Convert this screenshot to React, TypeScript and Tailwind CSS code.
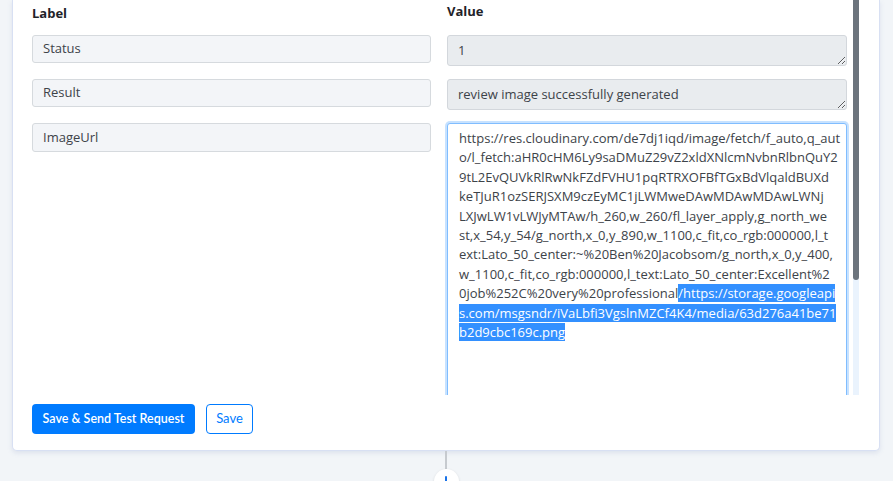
import React from 'react'

const URL_LINES = [
  'https://res.cloudinary.com/de7dj1iqd/image/fetch/f_auto,q_aut',
  'o/l_fetch:aHR0cHM6Ly9saDMuZ29vZ2xldXNlcmNvbnRlbnQuY2',
  '9tL2EvQUVkRlRwNkFZdFVHU1pqRTRXOFBfTGxBdVlqaldBUXd',
  'keTJuR1ozSERJSXM9czEyMC1jLWMweDAwMDAwMDAwLWNj',
  'LXJwLW1vLWJyMTAw/h_260,w_260/fl_layer_apply,g_north_we',
  'st,x_54,y_54/g_north,x_0,y_890,w_1100,c_fit,co_rgb:000000,l_t',
  'ext:Lato_50_center:~%20Ben%20Jacobsom/g_north,x_0,y_400,',
  'w_1100,c_fit,co_rgb:000000,l_text:Lato_50_center:Excellent%2',
]

// tail of the url that is highlighted as a text selection
const SELECTED_LINES = [
  's.com/msgsndr/iVaLbfi3VgslnMZCf4K4/media/63d276a41be71',
  'b2d9cbc169c.png',
]

const fields = [
  { label: 'Status', value: '1' },
  { label: 'Result', value: 'review image successfully generated' },
]

export default function App() {
  return (
    <div className="min-h-screen bg-[#f2f5f8] pl-[12px] pr-[13px] font-['Open_Sans','Noto_Sans',sans-serif] text-[13px]">
      <div className="rounded-b-[5px] border-x border-b border-[#d8e0f3] bg-white shadow-[0_2px_5px_rgba(120,140,190,0.18)]">
        <div className="flex pr-[20px]">
          <div className="h-[395px] flex-1 overflow-hidden pl-[19px] pr-[6px]">
            <div className="grid grid-cols-[399px_400px] gap-x-4">
              <div className="h-[35px] pt-[4px] font-bold text-[#1f2329]">Label</div>
              <div className="h-[35px] pt-[2px] font-bold text-[#1f2329]">Value</div>
            </div>

            <div className="grid grid-cols-[399px_400px] gap-x-4 gap-y-[13px]">
              {fields.map((f) => (
                <React.Fragment key={f.label}>
                  <div className="flex h-[28px] items-center rounded-[3px] border border-[#d6dade] bg-[#f3f5f8] pl-[10px] text-[#3d4349]">
                    {f.label}
                  </div>
                  <textarea
                    readOnly
                    value={f.value}
                    rows={1}
                    className="block h-[31px] w-full resize-y overflow-hidden rounded-[3px] border border-[#d3d7dc] bg-[#e9ecef] px-[10px] py-[5px] leading-[19px] text-[#3d4349] outline-none"
                  />
                </React.Fragment>
              ))}

              <div className="flex h-[29px] items-center rounded-[3px] border border-[#d6dade] bg-[#f3f5f8] pl-[10px] text-[#3d4349]">
                ImageUrl
              </div>
              <div className="h-[330px] rounded-[3px] border border-[#80bdff] bg-white px-[11px] pt-[5px] leading-[19.4px] text-[#3d4349] shadow-[0_0_0_2px_rgba(0,123,255,0.22)]">
                {URL_LINES.map((line) => (
                  <div key={line} className="whitespace-nowrap">
                    {line}
                  </div>
                ))}
                <div className="whitespace-nowrap">
                  0job%252C%20very%20professional
                  <span className="bg-[#3390ff] text-white">/https://storage.googleapi</span>
                </div>
                {SELECTED_LINES.map((line) => (
                  <div key={line} className="whitespace-nowrap">
                    <span className="bg-[#3390ff] text-white">{line}</span>
                  </div>
                ))}
              </div>
            </div>
          </div>

          {/* scrollbar */}
          <div className="h-[395px] w-[6px] bg-[#eaf3fd]">
            <div className="h-[280px] rounded-b-[3px] bg-[#6c747d]" />
          </div>
        </div>

        <div className="flex gap-[11px] pb-[16px] pl-[19px] pt-[9px] font-['Lato',sans-serif]">
          <button className="h-[30px] w-[163px] rounded-[4px] bg-[#007bff] text-[12.5px] font-semibold text-white">
            Save &amp; Send Test Request
          </button>
          <button className="h-[30px] w-[47px] rounded-[4px] border border-[#007bff] bg-white text-[13px] text-[#007bff]">
            Save
          </button>
        </div>
      </div>

      {/* connector to the next step */}
      <div className="flex flex-col items-center">
        <div className="h-[18px] w-[2px] bg-[#c6cacf]" />
        <div className="flex h-[25px] w-[25px] items-center justify-center rounded-full bg-white shadow-[0_1px_3px_rgba(0,0,0,0.12)]">
          <svg width="12" height="12" viewBox="0 0 12 12">
            <path d="M6 1v10M1 6h10" stroke="#1a73e8" strokeWidth="2" strokeLinecap="round" />
          </svg>
        </div>
      </div>
    </div>
  )
}
